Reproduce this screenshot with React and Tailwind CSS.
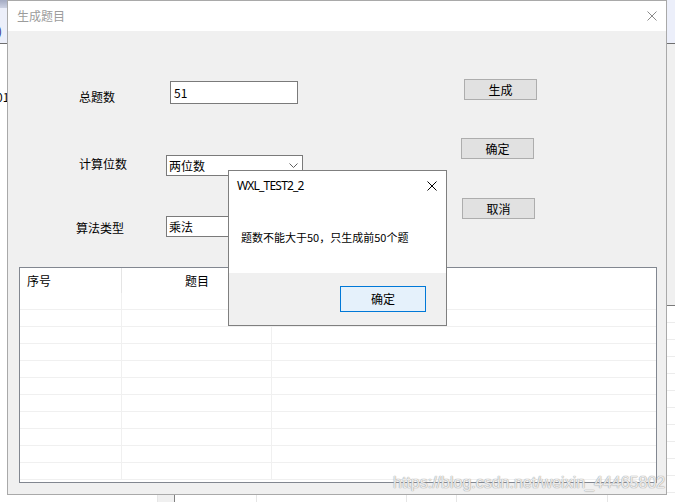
// 生成题目窗口 + 消息框（WinForms 截图复刻）
import React from "react";

const cjk = "font-['Noto_Sans_CJK_SC','Noto_Sans',sans-serif]";

function CloseGlyph({ color = "#000", size = 10 }) {
  return (
    <svg width={size} height={size} viewBox="0 0 10 10" className="block">
      <path d="M0.5 0.5 L9.5 9.5 M9.5 0.5 L0.5 9.5" stroke={color} strokeWidth="1" fill="none" />
    </svg>
  );
}

function Chevron() {
  return (
    <svg width="9" height="5" viewBox="0 0 9 5" className="block">
      <path d="M0.5 0.5 L4.5 4.5 L8.5 0.5" stroke="#606060" strokeWidth="1" fill="none" />
    </svg>
  );
}

function WinButton({ children, className = "" }) {
  return (
    <div className={`w-[73px] h-[21px] bg-[#e1e1e1] border border-[#adadad] flex items-center justify-center text-[12px] text-black ${className}`}>
      {children}
    </div>
  );
}

function Combo({ value }) {
  return (
    <div className="w-[137px] h-[21px] bg-white border border-[#7a7a7a] flex items-center justify-between pl-[2px] pr-[4px] text-[12px] text-black">
      <span>{value}</span>
      <Chevron />
    </div>
  );
}

function ListView() {
  const rows = Array.from({ length: 11 });
  return (
    <div className="ml-[11px] mr-[9px] h-[216px] bg-white border border-[#828790] flex flex-col overflow-hidden">
      {/* 表头 */}
      <div className="h-[25px] flex shrink-0 text-[12px] text-black">
        <div className="w-[102px] border-r border-[#e5e5e5] flex items-center pl-[7px]">序号</div>
        <div className="w-[150px] flex items-center justify-center">题目</div>
        <div className="flex-1" />
      </div>
      {rows.map((_, i) => (
        <div key={i} className="h-[17px] flex shrink-0 border-b border-[#f0f0f0]">
          <div className="w-[102px] border-r border-[#f0f0f0]" />
          <div className="w-[150px] border-r border-[#f0f0f0]" />
          <div className="flex-1" />
        </div>
      ))}
    </div>
  );
}

function MainWindow() {
  return (
    <div className={`absolute left-[7px] top-0 w-[660px] h-[495px] border border-[#a9a9a9] bg-[#f0f0f0] flex flex-col ${cjk}`}>
      <div className="h-[30px] shrink-0 bg-white flex items-center justify-between pl-[9px] pr-[9px]">
        <span className="text-[12px] text-[#9c9c9c]">生成题目</span>
        <CloseGlyph color="#8a8a8a" />
      </div>

      <div className="flex-1 flex flex-col">
        <div className="h-[236px] shrink-0 flex">
          {/* 左侧：标签 + 输入 */}
          <div className="w-[300px] flex flex-col text-[12px] text-black leading-[14px]">
            <div className="mt-[50px] h-[23px] flex items-start">
              <span className="w-[162px] pl-[71px] pt-[9px]">总题数</span>
              <div className="w-[128px] h-[23px] bg-white border border-[#7a7a7a] flex items-center pl-[3px]">51</div>
            </div>
            <div className="mt-[51px] h-[21px] flex items-start">
              <span className="w-[158px] pl-[71px] pt-[2px]">计算位数</span>
              <Combo value="两位数" />
            </div>
            <div className="mt-[40px] h-[21px] flex items-start">
              <span className="w-[158px] pl-[68px] pt-[5px]">算法类型</span>
              <Combo value="乘法" />
            </div>
          </div>

          {/* 右侧按钮 */}
          <div className="pl-[153px] flex flex-col">
            <WinButton className="mt-[48px] ml-[3px]">生成</WinButton>
            <WinButton className="mt-[38px]">确定</WinButton>
            <WinButton className="mt-[39px] ml-[1px]">取消</WinButton>
          </div>
        </div>

        <ListView />
      </div>
    </div>
  );
}

function MessageBox() {
  return (
    <div className={`absolute left-[228px] top-[170px] w-[219px] h-[156px] border border-[#7f7f7f] bg-white flex flex-col ${cjk}`}>
      <div className="h-[102px] shrink-0 bg-white flex flex-col">
        <div className="h-[30px] flex items-center justify-between pl-[8px] pr-[9px]">
          <span className="text-[12px] tracking-[-0.8px] text-black font-['Noto_Sans','Liberation_Sans',sans-serif]">WXL_TEST2_2</span>
          <CloseGlyph />
        </div>
        <div className="mt-[28px] pl-[12px] text-[11px] leading-[16px] text-black">
          题数不能大于50，只生成前50个题
        </div>
      </div>
      <div className="flex-1 bg-[#f0f0f0] flex justify-end items-start pt-[13px] pr-[20px]">
        <div className="w-[86px] h-[26px] bg-[#e5f1fb] border border-[#0078d7] flex items-center justify-center text-[12px] text-black">
          确定
        </div>
      </div>
    </div>
  );
}

export default function App() {
  return (
    <div className={`relative w-[675px] h-[502px] overflow-hidden bg-white ${cjk}`}>
      {/* 背后桌面上的其它窗口 */}
      <div className="h-full flex flex-col">
        <div className="h-[8px] flex shrink-0">
          <div className="w-[8px] bg-gradient-to-b from-[#a3aac2] to-[#cdd2e4]" />
          <div className="flex-1 bg-[#eceffa]" />
        </div>
        <div className="h-[35px] shrink-0 bg-[#eceffa] pt-[16px] text-[12px] leading-[14px] text-[#1c2c80]">
          <span className="block -ml-[2px]">)</span>
        </div>
        <div className="h-[1px] shrink-0 bg-[#6f6f6f]" />
        <div className="flex-1 flex">
          <div className="w-[8px] shrink-0 bg-white pt-[46px] text-[12px] text-black leading-[14px] overflow-hidden">
            <span className="-ml-[4px] block whitespace-nowrap">01</span>
          </div>
          <div className="flex-1 flex flex-col">
            <div className="h-[261px] shrink-0 bg-[#f0f0f0]" />
            <div className="h-[1px] shrink-0 bg-[#7a7a7a]" />
            <div className="flex-1 bg-white flex flex-col">
              {Array.from({ length: 11 }).map((_, i) => (
                <div key={i} className="h-[17px] shrink-0 border-b border-[#ececec]" />
              ))}
            </div>
            <div className="h-[7px] shrink-0 bg-white flex">
              <div className="w-[150px] border-r border-[#e6e6e6]" />
              <div className="w-[17px] bg-[#f0f0f0] border-r border-[#808080]" />
              <div className="w-[82px] border-r border-[#e6e6e6]" />
              <div className="w-[150px] border-r border-[#e6e6e6]" />
              <div className="w-[50px] border-r border-[#e6e6e6]" />
              <div className="w-[151px] border-r border-[#e6e6e6]" />
              <div className="flex-1" />
            </div>
          </div>
        </div>
      </div>

      <MainWindow />
      <MessageBox />

      {/* CSDN 水印 */}
      <div className="absolute left-[393px] top-[474px] text-[16px] leading-[18px] text-white/80 font-['Liberation_Sans',Arial,sans-serif] [text-shadow:0_0_1px_#9a9a9a,0_0_1px_#9a9a9a] whitespace-nowrap">
        https://blog.csdn.net/weixin_44465802
      </div>
    </div>
  );
}
